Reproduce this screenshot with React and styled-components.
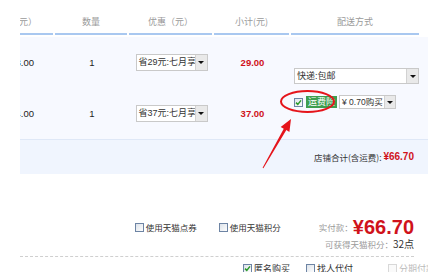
import React from "react";
import styled, { createGlobalStyle } from "styled-components";

const Global = createGlobalStyle`
  html, body { margin: 0; padding: 0; background: #fff; }
  body { font-family: "Liberation Sans", "Noto Sans CJK SC", sans-serif; }
`;

const Page = styled.div`
  position: relative;
  width: 428px;
  height: 272px;
  overflow: hidden;
  background: #fff;
  padding-left: 20px;
  box-sizing: border-box;
  font-size: 9px;
  color: #333;
`;

const COLS = "35px 74px 85px 77px 130px";

const HeaderRow = styled.div`
  display: grid;
  grid-template-columns: ${COLS};
  height: 35px;
`;

const HeadCell = styled.div`
  display: flex;
  align-items: flex-end;
  justify-content: ${(p) => (p.$clip ? "flex-end" : "center")};
  padding-bottom: 5px;
  padding-right: ${(p) => (p.$clip ? "16px" : "0")};
  margin-right: 2px;
  border-bottom: 2px solid #a9c8f0;
  overflow: hidden;
  white-space: nowrap;
  color: #9a9a9a;
  font-family: "Noto Sans CJK SC", sans-serif;
  font-size: 9px;
  line-height: 12px;
`;

const Body = styled.div`
  margin-top: 2px;
  background: #f7f9ff;
`;

const Items = styled.div`
  display: grid;
  grid-template-columns: ${COLS};
  grid-template-rows: 51px 51px;
  border-bottom: 1px solid #dfe8f7;
`;

const Cell = styled.div`
  display: flex;
  align-items: center;
  justify-content: ${(p) => (p.$clip ? "flex-end" : "center")};
  padding-right: ${(p) => (p.$clip ? "21px" : "0")};
  overflow: hidden;
  white-space: nowrap;
  font-size: 9.5px;
  color: ${(p) => (p.$red ? "#d0121b" : "#222")};
  font-weight: ${(p) => (p.$red ? "bold" : "normal")};
`;

const ShipCell = styled.div`
  grid-column: 5;
  grid-row: 1 / span 2;
  display: flex;
  flex-direction: column;
  align-items: flex-start;
  padding: 31px 0 0 3px;
  gap: 11px;
`;

const Select = styled.div`
  display: flex;
  align-items: stretch;
  width: ${(p) => p.$w}px;
  height: ${(p) => p.$h}px;
  background: #fff;
  border: 1px solid #c9c9c9;
  box-sizing: border-box;
  font-family: "Liberation Sans", "Noto Sans CJK SC", sans-serif;
  font-size: ${(p) => p.$fs || 9}px;
  color: #333;
`;

const SelectText = styled.div`
  flex: 1;
  overflow: hidden;
  white-space: nowrap;
  display: flex;
  align-items: center;
  padding-left: 2px;
  line-height: 1;
`;

const SelectArrow = styled.div`
  width: ${(p) => p.$w || 11}px;
  flex: none;
  background: #e9e9e9;
  border-left: 1px solid #d2d2d2;
  display: flex;
  align-items: center;
  justify-content: center;
  &::after {
    content: "";
    border-left: 3px solid transparent;
    border-right: 3px solid transparent;
    border-top: 3px solid #111;
  }
`;

const InsRow = styled.div`
  display: flex;
  align-items: center;
  gap: 2px;
  height: 14px;
`;

const Box = styled.span`
  display: inline-flex;
  align-items: center;
  justify-content: center;
  width: 9px;
  height: 9px;
  box-sizing: border-box;
  border: 1px solid ${(p) => (p.$disabled ? "#d8d8d8" : "#6d84a4")};
  background: ${(p) =>
    p.$disabled ? "#fafafa" : "linear-gradient(135deg, #dde3ea, #fdfdfd)"};
  flex: none;
`;

const GreenTag = styled.span`
  background: #3e9e4f;
  color: #fff;
  font-family: "Noto Sans CJK SC", sans-serif;
  font-size: 9px;
  line-height: 12px;
  padding: 0 2px;
  margin-left: 1px;
`;

const StoreTotal = styled.div`
  height: 34px;
  display: flex;
  align-items: center;
  justify-content: flex-end;
  padding-right: 14px;
  background: #f0f5fe;
  font-family: "Noto Sans CJK SC", sans-serif;
  font-size: 8.5px;
  color: #333;
`;

const RedBold = styled.span`
  color: #d0121b;
  font-family: "Liberation Sans", sans-serif;
  font-weight: bold;
  font-size: ${(p) => p.$size || 10}px;
  line-height: 1;
`;

const Footer = styled.div`
  padding-top: 42px;
`;

const OptionsRow = styled.div`
  display: flex;
  align-items: center;
  justify-content: flex-end;
  padding-right: 14px;
  height: 22px;
  font-family: "Noto Sans CJK SC", sans-serif;
  font-size: 8.5px;
`;

const Option = styled.label`
  display: inline-flex;
  align-items: center;
  gap: 2px;
  margin-right: ${(p) => p.$mr || 0}px;
  color: ${(p) => (p.$muted ? "#bbb" : "#333")};
`;

const Pay = styled.div`
  display: flex;
  align-items: center;
  color: #9a9a9a;
`;

const PointsRow = styled.div`
  display: flex;
  justify-content: flex-end;
  align-items: center;
  padding-right: 14px;
  height: 14px;
  margin-top: -1px;
  font-family: "Noto Sans CJK SC", sans-serif;
  font-size: 8.5px;
  line-height: 11px;
  color: #9a9a9a;
`;

const Points = styled.span`
  color: #333;
  font-size: 10px;
  line-height: 1;
`;

const Dotted = styled.div`
  margin: 5px 14px 0 0;
  border-top: 1px dashed #cfcfcf;
`;

const BottomRow = styled.div`
  display: flex;
  align-items: center;
  padding-left: 223px;
  margin-top: 5px;
  height: 12px;
  font-family: "Noto Sans CJK SC", sans-serif;
  font-size: 9px;
  white-space: nowrap;
`;

const Overlay = styled.svg`
  position: absolute;
  left: 0;
  top: 0;
  pointer-events: none;
`;

const Check = () => (
  <svg width="7" height="7" viewBox="0 0 7 7">
    <path d="M1 3.6 L2.8 5.4 L6 1.4" fill="none" stroke="#2a9a2a" strokeWidth="1.5" />
  </svg>
);

const CheckBox = ({ checked, disabled }) => (
  <Box $disabled={disabled}>{checked ? <Check /> : null}</Box>
);

export default function App() {
  return (
    <>
      <Global />
      <Page>
        <HeaderRow>
          <HeadCell $clip>单价（元）</HeadCell>
          <HeadCell>数量</HeadCell>
          <HeadCell>优惠（元）</HeadCell>
          <HeadCell>小计(元)</HeadCell>
          <HeadCell>配送方式</HeadCell>
        </HeaderRow>
        <Body>
          <Items>
            <Cell $clip>58.00</Cell>
            <Cell>1</Cell>
            <Cell>
              <Select $w={72} $h={17}>
                <SelectText>省29元:七月享银</SelectText>
                <SelectArrow />
              </Select>
            </Cell>
            <Cell $red>29.00</Cell>
            <ShipCell>
              <Select $w={125} $h={16}>
                <SelectText>快递:包邮</SelectText>
                <SelectArrow />
              </Select>
              <InsRow>
                <CheckBox checked />
                <GreenTag>运费险</GreenTag>
                <Select $w={57} $h={14} $fs={8.5}>
                  <SelectText>¥ 0.70购买</SelectText>
                  <SelectArrow $w={10} />
                </Select>
              </InsRow>
            </ShipCell>
            <Cell $clip>74.00</Cell>
            <Cell>1</Cell>
            <Cell>
              <Select $w={72} $h={17}>
                <SelectText>省37元:七月享银</SelectText>
                <SelectArrow />
              </Select>
            </Cell>
            <Cell $red>37.00</Cell>
          </Items>
          <StoreTotal>
            店铺合计(含运费):&nbsp;<RedBold $size={10}>¥66.70</RedBold>
          </StoreTotal>
        </Body>
        <Footer>
          <OptionsRow>
            <Option $mr={22}>
              <CheckBox />
              使用天猫点券
            </Option>
            <Option $mr={38}>
              <CheckBox />
              使用天猫积分
            </Option>
            <Pay>
              实付款：<RedBold $size={20}>¥66.70</RedBold>
            </Pay>
          </OptionsRow>
          <PointsRow>
            可获得天猫积分：<Points>32点</Points>
          </PointsRow>
          <Dotted />
          <BottomRow>
            <Option $mr={16}>
              <CheckBox checked />
              匿名购买
            </Option>
            <Option $mr={35}>
              <CheckBox />
              找人代付
            </Option>
            <Option $muted>
              <CheckBox disabled />
              分期付款
            </Option>
          </BottomRow>
        </Footer>
        <Overlay width="428" height="272" viewBox="0 0 428 272">
          <ellipse cx="307.5" cy="101.5" rx="26.5" ry="10.5" fill="none" stroke="#e5141b" strokeWidth="2" />
          <polygon
            points="262.6,167.8 283.75,128.7 280.7,126.9 291,119 289.4,131.9 286.35,130.1 263.4,168.2"
            fill="#e5141b"
          />
        </Overlay>
      </Page>
    </>
  );
}
